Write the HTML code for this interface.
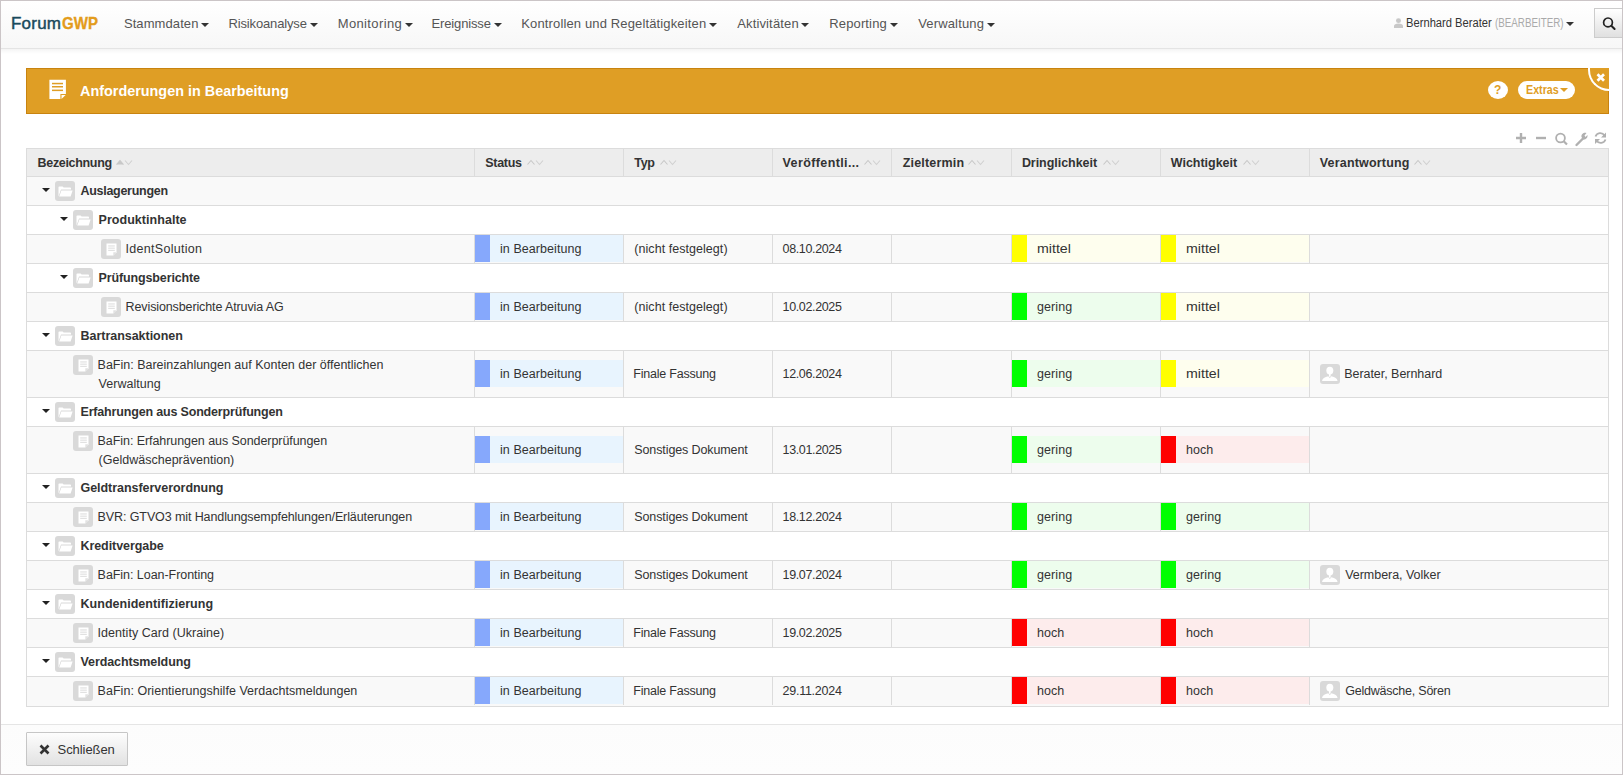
<!DOCTYPE html>
<html><head><meta charset="utf-8"><title>Anforderungen in Bearbeitung</title>
<style>
html,body{margin:0;padding:0;}
body{width:1623px;height:775px;overflow:hidden;position:relative;background:#fff;font-family:"Liberation Sans", sans-serif;}
.t{position:absolute;white-space:nowrap;line-height:1;}
.b{position:absolute;}
.caret{position:absolute;width:0;height:0;border-left:4px solid transparent;border-right:4px solid transparent;border-top:4px solid #333;}
.ico{position:absolute;width:20px;height:20px;border-radius:3px;background:#d9d9d9;display:flex;align-items:center;justify-content:center;}
.av{position:absolute;width:20px;height:20px;border-radius:3px;background:#d9d9d9;}
</style></head><body>
<div class="b" style="left:1px;top:1px;width:1621px;height:47px;background:linear-gradient(#fff,#f7f7f7);"></div>
<div class="b" style="left:1px;top:48px;width:1621px;height:1px;background:#e4e4e4;"></div>
<div class="b" style="left:1px;top:49px;width:1621px;height:5px;background:linear-gradient(rgba(0,0,0,0.045),rgba(0,0,0,0));"></div>
<div class="t" id="t0" style="left:11.00px;top:15.21px;font-size:17px;font-weight:400;color:#1a4a5c;letter-spacing:0.211px;-webkit-text-stroke:0.45px #1a4a5c;">Forum</div>
<div class="t" id="t1" style="left:62.30px;top:15.21px;font-size:17px;font-weight:700;color:#e39c1c;transform:scaleX(0.8841);transform-origin:0.00px 0;-webkit-text-stroke:0.35px #e39c1c;">GWP</div>
<div class="t" id="t2" style="left:123.90px;top:16.60px;font-size:13px;font-weight:400;color:#555;letter-spacing:0.092px;">Stammdaten</div>
<div class="caret" style="left:201.0px;top:23px;"></div>
<div class="t" id="t3" style="left:228.50px;top:16.60px;font-size:13px;font-weight:400;color:#555;letter-spacing:-0.148px;">Risikoanalyse</div>
<div class="caret" style="left:309.7px;top:23px;"></div>
<div class="t" id="t4" style="left:337.70px;top:16.60px;font-size:13px;font-weight:400;color:#555;letter-spacing:0.370px;">Monitoring</div>
<div class="caret" style="left:404.5px;top:23px;"></div>
<div class="t" id="t5" style="left:431.50px;top:16.60px;font-size:13px;font-weight:400;color:#555;letter-spacing:-0.141px;">Ereignisse</div>
<div class="caret" style="left:493.7px;top:23px;"></div>
<div class="t" id="t6" style="left:521.30px;top:16.60px;font-size:13px;font-weight:400;color:#555;letter-spacing:0.138px;">Kontrollen und Regeltätigkeiten</div>
<div class="caret" style="left:708.9px;top:23px;"></div>
<div class="t" id="t7" style="left:737.20px;top:16.60px;font-size:13px;font-weight:400;color:#555;letter-spacing:0.146px;">Aktivitäten</div>
<div class="caret" style="left:801.4px;top:23px;"></div>
<div class="t" id="t8" style="left:829.30px;top:16.60px;font-size:13px;font-weight:400;color:#555;letter-spacing:0.133px;">Reporting</div>
<div class="caret" style="left:889.5px;top:23px;"></div>
<div class="t" id="t9" style="left:918.20px;top:16.60px;font-size:13px;font-weight:400;color:#555;letter-spacing:0.157px;">Verwaltung</div>
<div class="caret" style="left:986.7px;top:23px;"></div>
<svg class="b" style="left:1393.5px;top:18px" width="9" height="10" viewBox="0 0 10 12" preserveAspectRatio="none"><circle cx="5" cy="3.2" r="2.8" fill="#c8c8c8"/><path d="M0 12 V9.5 C0 7.5 2 6.5 5 6.5 C8 6.5 10 7.5 10 9.5 V12 Z" fill="#c8c8c8"/></svg>
<div class="t" id="t10" style="left:1406.00px;top:17.42px;font-size:12.5px;font-weight:400;color:#333;transform:scaleX(0.8921);transform-origin:1.00px 0;">Bernhard Berater</div>
<div class="t" id="t11" style="left:1495.00px;top:17.42px;font-size:12.5px;font-weight:400;color:#aaa;transform:scaleX(0.7831);transform-origin:0.00px 0;">(BEARBEITER)</div>
<div class="caret" style="left:1566px;top:22px;border-top-color:#333"></div>
<div class="b" style="left:1594px;top:8px;width:30px;height:30px;box-sizing:border-box;border:1px solid #ccc;background:linear-gradient(#fff,#e0e0e0);"></div>
<svg class="b" style="left:1602px;top:16px" width="15" height="15" viewBox="0 0 15 15"><circle cx="6" cy="6.4" r="4.4" fill="none" stroke="#222" stroke-width="1.7"/><path d="M9.3 9.7 L12.6 13" stroke="#222" stroke-width="2" stroke-linecap="round"/></svg>
<div class="b" style="left:26px;top:68px;width:1583px;height:46px;box-sizing:border-box;border:1px solid #c8830f;background:#df9e25;"></div>
<svg class="b" style="left:49px;top:79px" width="18" height="21" viewBox="0 0 18 21"><path d="M0.4 0.8 H16.9 V15 H11.4 V20 H0.4 Z" fill="#fff"/><rect x="3" y="3.8" width="11" height="1.5" fill="#df9e25"/><rect x="3" y="7" width="11" height="1.5" fill="#df9e25"/><rect x="3" y="10.6" width="11" height="1.5" fill="#df9e25"/><path d="M12.5 16.1 H16.6 L12.5 20 Z" fill="#fff"/></svg>
<div class="t" id="t12" style="left:80.00px;top:83.38px;font-size:15.5px;font-weight:700;color:#fff;transform:scaleX(0.9287);transform-origin:0.00px 0;">Anforderungen in Bearbeitung</div>
<div class="b" style="left:1488px;top:81px;width:20px;height:18px;border-radius:10px/9px;background:#fff;"></div>
<div class="t" style="left:1494.00px;top:84.04px;font-size:12px;font-weight:700;color:#df9e25;">?</div>
<div class="b" style="left:1518px;top:81px;width:57px;height:18px;border-radius:9px;background:#fff;"></div>
<div class="t" id="t14" style="left:1526.00px;top:84.04px;font-size:12px;font-weight:700;color:#df9e25;transform:scaleX(0.8915);transform-origin:0.00px 0;">Extras</div>
<div class="caret" style="left:1560px;top:88px;border-top-color:#df9e25"></div>
<div class="b" style="left:1588px;top:68px;width:21px;height:23px;box-sizing:border-box;border-left:2px solid #fff;border-bottom:2px solid #fff;border-bottom-left-radius:21px;background:#df9e25;"></div>
<div class="b" style="left:1609px;top:67px;width:13px;height:48px;background:#fff;"></div>
<svg class="b" style="left:1595.8px;top:73px" width="10" height="9" viewBox="0 0 10 9"><path d="M1.5 1.2 L8 7.8 M8 1.2 L1.5 7.8" stroke="#fff" stroke-width="2.7"/></svg>
<svg class="b" style="left:1515px;top:131px" width="95" height="16" viewBox="0 0 95 16"><path d="M6 2 V12 M1 7 H11" stroke="#b0b0b0" stroke-width="2.4"/><path d="M21 7 H31" stroke="#b0b0b0" stroke-width="2.4"/><circle cx="45.5" cy="7" r="4.4" fill="none" stroke="#b0b0b0" stroke-width="1.8"/><path d="M48.5 10 L52 13.5" stroke="#b0b0b0" stroke-width="2.2"/><path d="M61.5 14 L68 7.5" stroke="#b0b0b0" stroke-width="2.4" stroke-linecap="round"/><path d="M66.5 6 C66 3 69 1 71.5 2 L69.5 4.5 L70.5 6 L72.5 4 C73 7 70.5 9 68 8.5 Z" fill="#b0b0b0"/><path d="M81.5 9.5 A5 5 0 0 0 90.5 8.5 M80.5 5.5 A5 5 0 0 1 89.5 4.5" fill="none" stroke="#b0b0b0" stroke-width="1.8"/><path d="M91 1.5 V6.5 H86 Z M80 13 V8 H85 Z" fill="#b0b0b0"/></svg>
<div class="b" style="left:26px;top:148px;width:1583px;height:28px;background:#ededed;"></div>
<div class="t" id="t15" style="left:37.60px;top:156.92px;font-size:12.5px;font-weight:700;color:#333;letter-spacing:-0.325px;">Bezeichnung</div>
<svg class="b" style="left:116.1px;top:158px" width="17" height="9" viewBox="0 0 17 9"><path d="M0.5 6.5 L4 2.5 L7.5 6.5" fill="#c8c8c8" stroke="#c8c8c8" stroke-width="1.1"/><path d="M9 2.5 L12.5 6.5 L16 2.5" fill="none" stroke="#d0d0d0" stroke-width="1.1"/></svg>
<div class="t" id="t16" style="left:485.20px;top:156.92px;font-size:12.5px;font-weight:700;color:#333;letter-spacing:-0.270px;">Status</div>
<svg class="b" style="left:526.6px;top:158px" width="17" height="9" viewBox="0 0 17 9"><path d="M0.5 6.5 L4 2.5 L7.5 6.5" fill="none" stroke="#c8c8c8" stroke-width="1.1"/><path d="M9 2.5 L12.5 6.5 L16 2.5" fill="none" stroke="#d0d0d0" stroke-width="1.1"/></svg>
<div class="t" id="t17" style="left:634.30px;top:156.92px;font-size:12.5px;font-weight:700;color:#333;letter-spacing:-0.330px;">Typ</div>
<svg class="b" style="left:660.1px;top:158px" width="17" height="9" viewBox="0 0 17 9"><path d="M0.5 6.5 L4 2.5 L7.5 6.5" fill="none" stroke="#c8c8c8" stroke-width="1.1"/><path d="M9 2.5 L12.5 6.5 L16 2.5" fill="none" stroke="#d0d0d0" stroke-width="1.1"/></svg>
<div class="t" id="t18" style="left:782.60px;top:156.92px;font-size:12.5px;font-weight:700;color:#333;letter-spacing:0.380px;">Veröffentli...</div>
<svg class="b" style="left:864.4px;top:158px" width="17" height="9" viewBox="0 0 17 9"><path d="M0.5 6.5 L4 2.5 L7.5 6.5" fill="none" stroke="#c8c8c8" stroke-width="1.1"/><path d="M9 2.5 L12.5 6.5 L16 2.5" fill="none" stroke="#d0d0d0" stroke-width="1.1"/></svg>
<div class="t" id="t19" style="left:902.70px;top:156.92px;font-size:12.5px;font-weight:700;color:#333;letter-spacing:0.178px;">Zieltermin</div>
<svg class="b" style="left:968.3px;top:158px" width="17" height="9" viewBox="0 0 17 9"><path d="M0.5 6.5 L4 2.5 L7.5 6.5" fill="none" stroke="#c8c8c8" stroke-width="1.1"/><path d="M9 2.5 L12.5 6.5 L16 2.5" fill="none" stroke="#d0d0d0" stroke-width="1.1"/></svg>
<div class="t" id="t20" style="left:1021.90px;top:156.92px;font-size:12.5px;font-weight:700;color:#333;letter-spacing:-0.045px;">Dringlichkeit</div>
<svg class="b" style="left:1102.5px;top:158px" width="17" height="9" viewBox="0 0 17 9"><path d="M0.5 6.5 L4 2.5 L7.5 6.5" fill="none" stroke="#c8c8c8" stroke-width="1.1"/><path d="M9 2.5 L12.5 6.5 L16 2.5" fill="none" stroke="#d0d0d0" stroke-width="1.1"/></svg>
<div class="t" id="t21" style="left:1170.80px;top:156.92px;font-size:12.5px;font-weight:700;color:#333;letter-spacing:-0.020px;">Wichtigkeit</div>
<svg class="b" style="left:1242.6px;top:158px" width="17" height="9" viewBox="0 0 17 9"><path d="M0.5 6.5 L4 2.5 L7.5 6.5" fill="none" stroke="#c8c8c8" stroke-width="1.1"/><path d="M9 2.5 L12.5 6.5 L16 2.5" fill="none" stroke="#d0d0d0" stroke-width="1.1"/></svg>
<div class="t" id="t22" style="left:1319.80px;top:156.92px;font-size:12.5px;font-weight:700;color:#333;letter-spacing:0.177px;">Verantwortung</div>
<svg class="b" style="left:1413.8px;top:158px" width="17" height="9" viewBox="0 0 17 9"><path d="M0.5 6.5 L4 2.5 L7.5 6.5" fill="none" stroke="#c8c8c8" stroke-width="1.1"/><path d="M9 2.5 L12.5 6.5 L16 2.5" fill="none" stroke="#d0d0d0" stroke-width="1.1"/></svg>
<div class="b" style="left:26px;top:176px;width:1583px;height:29px;background:#f9f9f9;"></div>
<div class="b" style="left:26px;top:176px;width:1583px;height:1px;background:#dcdcdc;"></div>
<div class="caret" style="left:42.0px;top:188px;border-top-color:#222"></div>
<div class="ico" style="left:55px;top:181px"><svg width="15" height="11" viewBox="0 0 15 11"><path d="M0.5 10.5 V1.3 Q0.5 0.5 1.3 0.5 H4.6 L5.6 1.6 H12.2 Q13 1.6 13 2.4 V3.6 H3 Z" fill="#fff"/><path d="M1.2 10.5 L3.4 4.5 H14.6 L12.6 10.5 Z" fill="#fff"/></svg></div>
<div class="t" id="t23" style="left:80.50px;top:184.52px;font-size:12.5px;font-weight:700;color:#333;letter-spacing:-0.287px;">Auslagerungen</div>
<div class="b" style="left:26px;top:205px;width:1583px;height:29px;background:#fff;"></div>
<div class="b" style="left:26px;top:205px;width:1583px;height:1px;background:#dcdcdc;"></div>
<div class="caret" style="left:60.0px;top:217px;border-top-color:#222"></div>
<div class="ico" style="left:73px;top:210px"><svg width="15" height="11" viewBox="0 0 15 11"><path d="M0.5 10.5 V1.3 Q0.5 0.5 1.3 0.5 H4.6 L5.6 1.6 H12.2 Q13 1.6 13 2.4 V3.6 H3 Z" fill="#fff"/><path d="M1.2 10.5 L3.4 4.5 H14.6 L12.6 10.5 Z" fill="#fff"/></svg></div>
<div class="t" id="t24" style="left:98.50px;top:213.52px;font-size:12.5px;font-weight:700;color:#333;letter-spacing:0.042px;">Produktinhalte</div>
<div class="b" style="left:26px;top:234px;width:1583px;height:29px;background:#f9f9f9;"></div>
<div class="b" style="left:26px;top:234px;width:1583px;height:1px;background:#dcdcdc;"></div>
<div class="b" style="left:474px;top:234px;width:1px;height:29px;background:#dcdcdc;"></div>
<div class="b" style="left:623px;top:234px;width:1px;height:29px;background:#dcdcdc;"></div>
<div class="b" style="left:772px;top:234px;width:1px;height:29px;background:#dcdcdc;"></div>
<div class="b" style="left:891px;top:234px;width:1px;height:29px;background:#dcdcdc;"></div>
<div class="b" style="left:1011px;top:234px;width:1px;height:29px;background:#dcdcdc;"></div>
<div class="b" style="left:1160px;top:234px;width:1px;height:29px;background:#dcdcdc;"></div>
<div class="b" style="left:1309px;top:234px;width:1px;height:29px;background:#dcdcdc;"></div>
<div class="ico" style="left:101.3px;top:239px"><svg width="11" height="13" viewBox="0 0 11 13"><path d="M0.5 0.5 H10.5 V9.3 L7.3 12.5 H0.5 Z" fill="#fff"/><rect x="2.2" y="2.4" width="6.6" height="1.1" fill="#dedede"/><rect x="2.2" y="4.6" width="6.6" height="1.1" fill="#dedede"/><rect x="2.2" y="6.8" width="6.6" height="1.1" fill="#dedede"/><path d="M7.3 12.5 V9.3 H10.5 Z" fill="#e2e2e2"/></svg></div>
<div class="t" id="t25" style="left:125.60px;top:242.72px;font-size:12.5px;font-weight:400;color:#333;letter-spacing:0.290px;">IdentSolution</div>
<div class="b" style="left:475px;top:235.0px;width:15px;height:27px;background:#86a8fc;"></div>
<div class="b" style="left:490px;top:235.0px;width:133px;height:27px;background:#e8f4fe;"></div>
<div class="t" id="t26" style="left:500.00px;top:242.72px;font-size:12.5px;font-weight:400;color:#333;letter-spacing:0.064px;">in Bearbeitung</div>
<div class="t" id="t27" style="left:634.30px;top:242.72px;font-size:12.5px;font-weight:400;color:#333;letter-spacing:0.050px;">(nicht festgelegt)</div>
<div class="t" id="t28" style="left:782.60px;top:242.72px;font-size:12.5px;font-weight:400;color:#333;letter-spacing:-0.368px;">08.10.2024</div>
<div class="b" style="left:1012px;top:235.0px;width:15px;height:27px;background:#ffff00;"></div>
<div class="b" style="left:1027px;top:235.0px;width:133px;height:27px;background:#fefeee;"></div>
<div class="t" id="t29" style="left:1037.00px;top:242.72px;font-size:12.5px;font-weight:400;color:#333;transform:scaleX(1.1345);transform-origin:0.00px 0;">mittel</div>
<div class="b" style="left:1161px;top:235.0px;width:15px;height:27px;background:#ffff00;"></div>
<div class="b" style="left:1176px;top:235.0px;width:133px;height:27px;background:#fefeee;"></div>
<div class="t" id="t30" style="left:1186.00px;top:242.72px;font-size:12.5px;font-weight:400;color:#333;transform:scaleX(1.1345);transform-origin:0.00px 0;">mittel</div>
<div class="b" style="left:26px;top:263px;width:1583px;height:29px;background:#fff;"></div>
<div class="b" style="left:26px;top:263px;width:1583px;height:1px;background:#dcdcdc;"></div>
<div class="caret" style="left:60.0px;top:275px;border-top-color:#222"></div>
<div class="ico" style="left:73px;top:268px"><svg width="15" height="11" viewBox="0 0 15 11"><path d="M0.5 10.5 V1.3 Q0.5 0.5 1.3 0.5 H4.6 L5.6 1.6 H12.2 Q13 1.6 13 2.4 V3.6 H3 Z" fill="#fff"/><path d="M1.2 10.5 L3.4 4.5 H14.6 L12.6 10.5 Z" fill="#fff"/></svg></div>
<div class="t" id="t31" style="left:98.50px;top:271.52px;font-size:12.5px;font-weight:700;color:#333;letter-spacing:-0.129px;">Prüfungsberichte</div>
<div class="b" style="left:26px;top:292px;width:1583px;height:29px;background:#f9f9f9;"></div>
<div class="b" style="left:26px;top:292px;width:1583px;height:1px;background:#dcdcdc;"></div>
<div class="b" style="left:474px;top:292px;width:1px;height:29px;background:#dcdcdc;"></div>
<div class="b" style="left:623px;top:292px;width:1px;height:29px;background:#dcdcdc;"></div>
<div class="b" style="left:772px;top:292px;width:1px;height:29px;background:#dcdcdc;"></div>
<div class="b" style="left:891px;top:292px;width:1px;height:29px;background:#dcdcdc;"></div>
<div class="b" style="left:1011px;top:292px;width:1px;height:29px;background:#dcdcdc;"></div>
<div class="b" style="left:1160px;top:292px;width:1px;height:29px;background:#dcdcdc;"></div>
<div class="b" style="left:1309px;top:292px;width:1px;height:29px;background:#dcdcdc;"></div>
<div class="ico" style="left:101.3px;top:297px"><svg width="11" height="13" viewBox="0 0 11 13"><path d="M0.5 0.5 H10.5 V9.3 L7.3 12.5 H0.5 Z" fill="#fff"/><rect x="2.2" y="2.4" width="6.6" height="1.1" fill="#dedede"/><rect x="2.2" y="4.6" width="6.6" height="1.1" fill="#dedede"/><rect x="2.2" y="6.8" width="6.6" height="1.1" fill="#dedede"/><path d="M7.3 12.5 V9.3 H10.5 Z" fill="#e2e2e2"/></svg></div>
<div class="t" id="t32" style="left:125.60px;top:300.72px;font-size:12.5px;font-weight:400;color:#333;letter-spacing:-0.116px;">Revisionsberichte Atruvia AG</div>
<div class="b" style="left:475px;top:293.0px;width:15px;height:27px;background:#86a8fc;"></div>
<div class="b" style="left:490px;top:293.0px;width:133px;height:27px;background:#e8f4fe;"></div>
<div class="t" id="t33" style="left:500.00px;top:300.72px;font-size:12.5px;font-weight:400;color:#333;letter-spacing:0.064px;">in Bearbeitung</div>
<div class="t" id="t34" style="left:634.30px;top:300.72px;font-size:12.5px;font-weight:400;color:#333;letter-spacing:0.050px;">(nicht festgelegt)</div>
<div class="t" id="t35" style="left:782.60px;top:300.72px;font-size:12.5px;font-weight:400;color:#333;letter-spacing:-0.368px;">10.02.2025</div>
<div class="b" style="left:1012px;top:293.0px;width:15px;height:27px;background:#00ff00;"></div>
<div class="b" style="left:1027px;top:293.0px;width:133px;height:27px;background:#edfded;"></div>
<div class="t" id="t36" style="left:1037.00px;top:300.72px;font-size:12.5px;font-weight:400;color:#333;letter-spacing:0.101px;">gering</div>
<div class="b" style="left:1161px;top:293.0px;width:15px;height:27px;background:#ffff00;"></div>
<div class="b" style="left:1176px;top:293.0px;width:133px;height:27px;background:#fefeee;"></div>
<div class="t" id="t37" style="left:1186.00px;top:300.72px;font-size:12.5px;font-weight:400;color:#333;transform:scaleX(1.1345);transform-origin:0.00px 0;">mittel</div>
<div class="b" style="left:26px;top:321px;width:1583px;height:29px;background:#fff;"></div>
<div class="b" style="left:26px;top:321px;width:1583px;height:1px;background:#dcdcdc;"></div>
<div class="caret" style="left:42.0px;top:333px;border-top-color:#222"></div>
<div class="ico" style="left:55px;top:326px"><svg width="15" height="11" viewBox="0 0 15 11"><path d="M0.5 10.5 V1.3 Q0.5 0.5 1.3 0.5 H4.6 L5.6 1.6 H12.2 Q13 1.6 13 2.4 V3.6 H3 Z" fill="#fff"/><path d="M1.2 10.5 L3.4 4.5 H14.6 L12.6 10.5 Z" fill="#fff"/></svg></div>
<div class="t" id="t38" style="left:80.50px;top:329.52px;font-size:12.5px;font-weight:700;color:#333;letter-spacing:-0.031px;">Bartransaktionen</div>
<div class="b" style="left:26px;top:350px;width:1583px;height:47px;background:#f9f9f9;"></div>
<div class="b" style="left:26px;top:350px;width:1583px;height:1px;background:#dcdcdc;"></div>
<div class="b" style="left:474px;top:350px;width:1px;height:47px;background:#dcdcdc;"></div>
<div class="b" style="left:623px;top:350px;width:1px;height:47px;background:#dcdcdc;"></div>
<div class="b" style="left:772px;top:350px;width:1px;height:47px;background:#dcdcdc;"></div>
<div class="b" style="left:891px;top:350px;width:1px;height:47px;background:#dcdcdc;"></div>
<div class="b" style="left:1011px;top:350px;width:1px;height:47px;background:#dcdcdc;"></div>
<div class="b" style="left:1160px;top:350px;width:1px;height:47px;background:#dcdcdc;"></div>
<div class="b" style="left:1309px;top:350px;width:1px;height:47px;background:#dcdcdc;"></div>
<div class="ico" style="left:73.3px;top:355px"><svg width="11" height="13" viewBox="0 0 11 13"><path d="M0.5 0.5 H10.5 V9.3 L7.3 12.5 H0.5 Z" fill="#fff"/><rect x="2.2" y="2.4" width="6.6" height="1.1" fill="#dedede"/><rect x="2.2" y="4.6" width="6.6" height="1.1" fill="#dedede"/><rect x="2.2" y="6.8" width="6.6" height="1.1" fill="#dedede"/><path d="M7.3 12.5 V9.3 H10.5 Z" fill="#e2e2e2"/></svg></div>
<div class="t" id="t39" style="left:97.60px;top:359.32px;font-size:12.5px;font-weight:400;color:#333;letter-spacing:-0.005px;">BaFin: Bareinzahlungen auf Konten der öffentlichen</div>
<div class="t" id="t40" style="left:98.60px;top:377.82px;font-size:12.5px;font-weight:400;color:#333;letter-spacing:0.034px;">Verwaltung</div>
<div class="b" style="left:475px;top:360.0px;width:15px;height:27px;background:#86a8fc;"></div>
<div class="b" style="left:490px;top:360.0px;width:133px;height:27px;background:#e8f4fe;"></div>
<div class="t" id="t41" style="left:500.00px;top:367.72px;font-size:12.5px;font-weight:400;color:#333;letter-spacing:0.064px;">in Bearbeitung</div>
<div class="t" id="t42" style="left:633.30px;top:367.72px;font-size:12.5px;font-weight:400;color:#333;letter-spacing:-0.208px;">Finale Fassung</div>
<div class="t" id="t43" style="left:782.60px;top:367.72px;font-size:12.5px;font-weight:400;color:#333;letter-spacing:-0.368px;">12.06.2024</div>
<div class="b" style="left:1012px;top:360.0px;width:15px;height:27px;background:#00ff00;"></div>
<div class="b" style="left:1027px;top:360.0px;width:133px;height:27px;background:#edfded;"></div>
<div class="t" id="t44" style="left:1037.00px;top:367.72px;font-size:12.5px;font-weight:400;color:#333;letter-spacing:0.101px;">gering</div>
<div class="b" style="left:1161px;top:360.0px;width:15px;height:27px;background:#ffff00;"></div>
<div class="b" style="left:1176px;top:360.0px;width:133px;height:27px;background:#fefeee;"></div>
<div class="t" id="t45" style="left:1186.00px;top:367.72px;font-size:12.5px;font-weight:400;color:#333;transform:scaleX(1.1345);transform-origin:0.00px 0;">mittel</div>
<div class="av" style="left:1320px;top:363.5px"><svg width="20" height="20" viewBox="0 0 20 20"><ellipse cx="9.8" cy="6.6" rx="3.5" ry="3.9" fill="#fff"/><path d="M9 10 H10.6 V12 L9.8 13.5 L9 12 Z" fill="#fff"/><path d="M2 17 C2.4 14.6 4.5 13.2 8.3 12.3 L9.8 14.2 L11.3 12.3 C15.1 13.2 17.2 14.6 17.6 17 Z" fill="#fff"/></svg></div>
<div class="t" id="t46" style="left:1344.20px;top:367.72px;font-size:12.5px;font-weight:400;color:#333;letter-spacing:-0.039px;">Berater, Bernhard</div>
<div class="b" style="left:26px;top:397px;width:1583px;height:29px;background:#fff;"></div>
<div class="b" style="left:26px;top:397px;width:1583px;height:1px;background:#dcdcdc;"></div>
<div class="caret" style="left:42.0px;top:409px;border-top-color:#222"></div>
<div class="ico" style="left:55px;top:402px"><svg width="15" height="11" viewBox="0 0 15 11"><path d="M0.5 10.5 V1.3 Q0.5 0.5 1.3 0.5 H4.6 L5.6 1.6 H12.2 Q13 1.6 13 2.4 V3.6 H3 Z" fill="#fff"/><path d="M1.2 10.5 L3.4 4.5 H14.6 L12.6 10.5 Z" fill="#fff"/></svg></div>
<div class="t" id="t47" style="left:80.50px;top:405.52px;font-size:12.5px;font-weight:700;color:#333;letter-spacing:-0.174px;">Erfahrungen aus Sonderprüfungen</div>
<div class="b" style="left:26px;top:426px;width:1583px;height:47px;background:#f9f9f9;"></div>
<div class="b" style="left:26px;top:426px;width:1583px;height:1px;background:#dcdcdc;"></div>
<div class="b" style="left:474px;top:426px;width:1px;height:47px;background:#dcdcdc;"></div>
<div class="b" style="left:623px;top:426px;width:1px;height:47px;background:#dcdcdc;"></div>
<div class="b" style="left:772px;top:426px;width:1px;height:47px;background:#dcdcdc;"></div>
<div class="b" style="left:891px;top:426px;width:1px;height:47px;background:#dcdcdc;"></div>
<div class="b" style="left:1011px;top:426px;width:1px;height:47px;background:#dcdcdc;"></div>
<div class="b" style="left:1160px;top:426px;width:1px;height:47px;background:#dcdcdc;"></div>
<div class="b" style="left:1309px;top:426px;width:1px;height:47px;background:#dcdcdc;"></div>
<div class="ico" style="left:73.3px;top:431px"><svg width="11" height="13" viewBox="0 0 11 13"><path d="M0.5 0.5 H10.5 V9.3 L7.3 12.5 H0.5 Z" fill="#fff"/><rect x="2.2" y="2.4" width="6.6" height="1.1" fill="#dedede"/><rect x="2.2" y="4.6" width="6.6" height="1.1" fill="#dedede"/><rect x="2.2" y="6.8" width="6.6" height="1.1" fill="#dedede"/><path d="M7.3 12.5 V9.3 H10.5 Z" fill="#e2e2e2"/></svg></div>
<div class="t" id="t48" style="left:97.60px;top:435.32px;font-size:12.5px;font-weight:400;color:#333;letter-spacing:-0.069px;">BaFin: Erfahrungen aus Sonderprüfungen</div>
<div class="t" id="t49" style="left:98.60px;top:453.82px;font-size:12.5px;font-weight:400;color:#333;letter-spacing:0.008px;">(Geldwäscheprävention)</div>
<div class="b" style="left:475px;top:436.0px;width:15px;height:27px;background:#86a8fc;"></div>
<div class="b" style="left:490px;top:436.0px;width:133px;height:27px;background:#e8f4fe;"></div>
<div class="t" id="t50" style="left:500.00px;top:443.72px;font-size:12.5px;font-weight:400;color:#333;letter-spacing:0.064px;">in Bearbeitung</div>
<div class="t" id="t51" style="left:634.30px;top:443.72px;font-size:12.5px;font-weight:400;color:#333;letter-spacing:-0.110px;">Sonstiges Dokument</div>
<div class="t" id="t52" style="left:782.60px;top:443.72px;font-size:12.5px;font-weight:400;color:#333;letter-spacing:-0.368px;">13.01.2025</div>
<div class="b" style="left:1012px;top:436.0px;width:15px;height:27px;background:#00ff00;"></div>
<div class="b" style="left:1027px;top:436.0px;width:133px;height:27px;background:#edfded;"></div>
<div class="t" id="t53" style="left:1037.00px;top:443.72px;font-size:12.5px;font-weight:400;color:#333;letter-spacing:0.101px;">gering</div>
<div class="b" style="left:1161px;top:436.0px;width:15px;height:27px;background:#ff0000;"></div>
<div class="b" style="left:1176px;top:436.0px;width:133px;height:27px;background:#fdecec;"></div>
<div class="t" id="t54" style="left:1186.00px;top:443.72px;font-size:12.5px;font-weight:400;color:#333;letter-spacing:0.015px;">hoch</div>
<div class="b" style="left:26px;top:473px;width:1583px;height:29px;background:#fff;"></div>
<div class="b" style="left:26px;top:473px;width:1583px;height:1px;background:#dcdcdc;"></div>
<div class="caret" style="left:42.0px;top:485px;border-top-color:#222"></div>
<div class="ico" style="left:55px;top:478px"><svg width="15" height="11" viewBox="0 0 15 11"><path d="M0.5 10.5 V1.3 Q0.5 0.5 1.3 0.5 H4.6 L5.6 1.6 H12.2 Q13 1.6 13 2.4 V3.6 H3 Z" fill="#fff"/><path d="M1.2 10.5 L3.4 4.5 H14.6 L12.6 10.5 Z" fill="#fff"/></svg></div>
<div class="t" id="t55" style="left:80.50px;top:481.52px;font-size:12.5px;font-weight:700;color:#333;letter-spacing:-0.040px;">Geldtransferverordnung</div>
<div class="b" style="left:26px;top:502px;width:1583px;height:29px;background:#f9f9f9;"></div>
<div class="b" style="left:26px;top:502px;width:1583px;height:1px;background:#dcdcdc;"></div>
<div class="b" style="left:474px;top:502px;width:1px;height:29px;background:#dcdcdc;"></div>
<div class="b" style="left:623px;top:502px;width:1px;height:29px;background:#dcdcdc;"></div>
<div class="b" style="left:772px;top:502px;width:1px;height:29px;background:#dcdcdc;"></div>
<div class="b" style="left:891px;top:502px;width:1px;height:29px;background:#dcdcdc;"></div>
<div class="b" style="left:1011px;top:502px;width:1px;height:29px;background:#dcdcdc;"></div>
<div class="b" style="left:1160px;top:502px;width:1px;height:29px;background:#dcdcdc;"></div>
<div class="b" style="left:1309px;top:502px;width:1px;height:29px;background:#dcdcdc;"></div>
<div class="ico" style="left:73.3px;top:507px"><svg width="11" height="13" viewBox="0 0 11 13"><path d="M0.5 0.5 H10.5 V9.3 L7.3 12.5 H0.5 Z" fill="#fff"/><rect x="2.2" y="2.4" width="6.6" height="1.1" fill="#dedede"/><rect x="2.2" y="4.6" width="6.6" height="1.1" fill="#dedede"/><rect x="2.2" y="6.8" width="6.6" height="1.1" fill="#dedede"/><path d="M7.3 12.5 V9.3 H10.5 Z" fill="#e2e2e2"/></svg></div>
<div class="t" id="t56" style="left:97.60px;top:510.72px;font-size:12.5px;font-weight:400;color:#333;letter-spacing:-0.103px;">BVR: GTVO3 mit Handlungsempfehlungen/Erläuterungen</div>
<div class="b" style="left:475px;top:503.0px;width:15px;height:27px;background:#86a8fc;"></div>
<div class="b" style="left:490px;top:503.0px;width:133px;height:27px;background:#e8f4fe;"></div>
<div class="t" id="t57" style="left:500.00px;top:510.72px;font-size:12.5px;font-weight:400;color:#333;letter-spacing:0.064px;">in Bearbeitung</div>
<div class="t" id="t58" style="left:634.30px;top:510.72px;font-size:12.5px;font-weight:400;color:#333;letter-spacing:-0.110px;">Sonstiges Dokument</div>
<div class="t" id="t59" style="left:782.60px;top:510.72px;font-size:12.5px;font-weight:400;color:#333;letter-spacing:-0.368px;">18.12.2024</div>
<div class="b" style="left:1012px;top:503.0px;width:15px;height:27px;background:#00ff00;"></div>
<div class="b" style="left:1027px;top:503.0px;width:133px;height:27px;background:#edfded;"></div>
<div class="t" id="t60" style="left:1037.00px;top:510.72px;font-size:12.5px;font-weight:400;color:#333;letter-spacing:0.101px;">gering</div>
<div class="b" style="left:1161px;top:503.0px;width:15px;height:27px;background:#00ff00;"></div>
<div class="b" style="left:1176px;top:503.0px;width:133px;height:27px;background:#edfded;"></div>
<div class="t" id="t61" style="left:1186.00px;top:510.72px;font-size:12.5px;font-weight:400;color:#333;letter-spacing:0.101px;">gering</div>
<div class="b" style="left:26px;top:531px;width:1583px;height:29px;background:#fff;"></div>
<div class="b" style="left:26px;top:531px;width:1583px;height:1px;background:#dcdcdc;"></div>
<div class="caret" style="left:42.0px;top:543px;border-top-color:#222"></div>
<div class="ico" style="left:55px;top:536px"><svg width="15" height="11" viewBox="0 0 15 11"><path d="M0.5 10.5 V1.3 Q0.5 0.5 1.3 0.5 H4.6 L5.6 1.6 H12.2 Q13 1.6 13 2.4 V3.6 H3 Z" fill="#fff"/><path d="M1.2 10.5 L3.4 4.5 H14.6 L12.6 10.5 Z" fill="#fff"/></svg></div>
<div class="t" id="t62" style="left:80.50px;top:539.52px;font-size:12.5px;font-weight:700;color:#333;letter-spacing:-0.075px;">Kreditvergabe</div>
<div class="b" style="left:26px;top:560px;width:1583px;height:29px;background:#f9f9f9;"></div>
<div class="b" style="left:26px;top:560px;width:1583px;height:1px;background:#dcdcdc;"></div>
<div class="b" style="left:474px;top:560px;width:1px;height:29px;background:#dcdcdc;"></div>
<div class="b" style="left:623px;top:560px;width:1px;height:29px;background:#dcdcdc;"></div>
<div class="b" style="left:772px;top:560px;width:1px;height:29px;background:#dcdcdc;"></div>
<div class="b" style="left:891px;top:560px;width:1px;height:29px;background:#dcdcdc;"></div>
<div class="b" style="left:1011px;top:560px;width:1px;height:29px;background:#dcdcdc;"></div>
<div class="b" style="left:1160px;top:560px;width:1px;height:29px;background:#dcdcdc;"></div>
<div class="b" style="left:1309px;top:560px;width:1px;height:29px;background:#dcdcdc;"></div>
<div class="ico" style="left:73.3px;top:565px"><svg width="11" height="13" viewBox="0 0 11 13"><path d="M0.5 0.5 H10.5 V9.3 L7.3 12.5 H0.5 Z" fill="#fff"/><rect x="2.2" y="2.4" width="6.6" height="1.1" fill="#dedede"/><rect x="2.2" y="4.6" width="6.6" height="1.1" fill="#dedede"/><rect x="2.2" y="6.8" width="6.6" height="1.1" fill="#dedede"/><path d="M7.3 12.5 V9.3 H10.5 Z" fill="#e2e2e2"/></svg></div>
<div class="t" id="t63" style="left:97.60px;top:568.72px;font-size:12.5px;font-weight:400;color:#333;letter-spacing:-0.051px;">BaFin: Loan-Fronting</div>
<div class="b" style="left:475px;top:561.0px;width:15px;height:27px;background:#86a8fc;"></div>
<div class="b" style="left:490px;top:561.0px;width:133px;height:27px;background:#e8f4fe;"></div>
<div class="t" id="t64" style="left:500.00px;top:568.72px;font-size:12.5px;font-weight:400;color:#333;letter-spacing:0.064px;">in Bearbeitung</div>
<div class="t" id="t65" style="left:634.30px;top:568.72px;font-size:12.5px;font-weight:400;color:#333;letter-spacing:-0.110px;">Sonstiges Dokument</div>
<div class="t" id="t66" style="left:782.60px;top:568.72px;font-size:12.5px;font-weight:400;color:#333;letter-spacing:-0.368px;">19.07.2024</div>
<div class="b" style="left:1012px;top:561.0px;width:15px;height:27px;background:#00ff00;"></div>
<div class="b" style="left:1027px;top:561.0px;width:133px;height:27px;background:#edfded;"></div>
<div class="t" id="t67" style="left:1037.00px;top:568.72px;font-size:12.5px;font-weight:400;color:#333;letter-spacing:0.101px;">gering</div>
<div class="b" style="left:1161px;top:561.0px;width:15px;height:27px;background:#00ff00;"></div>
<div class="b" style="left:1176px;top:561.0px;width:133px;height:27px;background:#edfded;"></div>
<div class="t" id="t68" style="left:1186.00px;top:568.72px;font-size:12.5px;font-weight:400;color:#333;letter-spacing:0.101px;">gering</div>
<div class="av" style="left:1320px;top:564.5px"><svg width="20" height="20" viewBox="0 0 20 20"><ellipse cx="9.8" cy="6.6" rx="3.5" ry="3.9" fill="#fff"/><path d="M9 10 H10.6 V12 L9.8 13.5 L9 12 Z" fill="#fff"/><path d="M2 17 C2.4 14.6 4.5 13.2 8.3 12.3 L9.8 14.2 L11.3 12.3 C15.1 13.2 17.2 14.6 17.6 17 Z" fill="#fff"/></svg></div>
<div class="t" id="t69" style="left:1345.20px;top:568.72px;font-size:12.5px;font-weight:400;color:#333;letter-spacing:-0.035px;">Vermbera, Volker</div>
<div class="b" style="left:26px;top:589px;width:1583px;height:29px;background:#fff;"></div>
<div class="b" style="left:26px;top:589px;width:1583px;height:1px;background:#dcdcdc;"></div>
<div class="caret" style="left:42.0px;top:601px;border-top-color:#222"></div>
<div class="ico" style="left:55px;top:594px"><svg width="15" height="11" viewBox="0 0 15 11"><path d="M0.5 10.5 V1.3 Q0.5 0.5 1.3 0.5 H4.6 L5.6 1.6 H12.2 Q13 1.6 13 2.4 V3.6 H3 Z" fill="#fff"/><path d="M1.2 10.5 L3.4 4.5 H14.6 L12.6 10.5 Z" fill="#fff"/></svg></div>
<div class="t" id="t70" style="left:80.50px;top:597.52px;font-size:12.5px;font-weight:700;color:#333;letter-spacing:0.030px;">Kundenidentifizierung</div>
<div class="b" style="left:26px;top:618px;width:1583px;height:29px;background:#f9f9f9;"></div>
<div class="b" style="left:26px;top:618px;width:1583px;height:1px;background:#dcdcdc;"></div>
<div class="b" style="left:474px;top:618px;width:1px;height:29px;background:#dcdcdc;"></div>
<div class="b" style="left:623px;top:618px;width:1px;height:29px;background:#dcdcdc;"></div>
<div class="b" style="left:772px;top:618px;width:1px;height:29px;background:#dcdcdc;"></div>
<div class="b" style="left:891px;top:618px;width:1px;height:29px;background:#dcdcdc;"></div>
<div class="b" style="left:1011px;top:618px;width:1px;height:29px;background:#dcdcdc;"></div>
<div class="b" style="left:1160px;top:618px;width:1px;height:29px;background:#dcdcdc;"></div>
<div class="b" style="left:1309px;top:618px;width:1px;height:29px;background:#dcdcdc;"></div>
<div class="ico" style="left:73.3px;top:623px"><svg width="11" height="13" viewBox="0 0 11 13"><path d="M0.5 0.5 H10.5 V9.3 L7.3 12.5 H0.5 Z" fill="#fff"/><rect x="2.2" y="2.4" width="6.6" height="1.1" fill="#dedede"/><rect x="2.2" y="4.6" width="6.6" height="1.1" fill="#dedede"/><rect x="2.2" y="6.8" width="6.6" height="1.1" fill="#dedede"/><path d="M7.3 12.5 V9.3 H10.5 Z" fill="#e2e2e2"/></svg></div>
<div class="t" id="t71" style="left:97.60px;top:626.72px;font-size:12.5px;font-weight:400;color:#333;letter-spacing:0.037px;">Identity Card (Ukraine)</div>
<div class="b" style="left:475px;top:619.0px;width:15px;height:27px;background:#86a8fc;"></div>
<div class="b" style="left:490px;top:619.0px;width:133px;height:27px;background:#e8f4fe;"></div>
<div class="t" id="t72" style="left:500.00px;top:626.72px;font-size:12.5px;font-weight:400;color:#333;letter-spacing:0.064px;">in Bearbeitung</div>
<div class="t" id="t73" style="left:633.30px;top:626.72px;font-size:12.5px;font-weight:400;color:#333;letter-spacing:-0.208px;">Finale Fassung</div>
<div class="t" id="t74" style="left:782.60px;top:626.72px;font-size:12.5px;font-weight:400;color:#333;letter-spacing:-0.368px;">19.02.2025</div>
<div class="b" style="left:1012px;top:619.0px;width:15px;height:27px;background:#ff0000;"></div>
<div class="b" style="left:1027px;top:619.0px;width:133px;height:27px;background:#fdecec;"></div>
<div class="t" id="t75" style="left:1037.00px;top:626.72px;font-size:12.5px;font-weight:400;color:#333;letter-spacing:0.015px;">hoch</div>
<div class="b" style="left:1161px;top:619.0px;width:15px;height:27px;background:#ff0000;"></div>
<div class="b" style="left:1176px;top:619.0px;width:133px;height:27px;background:#fdecec;"></div>
<div class="t" id="t76" style="left:1186.00px;top:626.72px;font-size:12.5px;font-weight:400;color:#333;letter-spacing:0.015px;">hoch</div>
<div class="b" style="left:26px;top:647px;width:1583px;height:29px;background:#fff;"></div>
<div class="b" style="left:26px;top:647px;width:1583px;height:1px;background:#dcdcdc;"></div>
<div class="caret" style="left:42.0px;top:659px;border-top-color:#222"></div>
<div class="ico" style="left:55px;top:652px"><svg width="15" height="11" viewBox="0 0 15 11"><path d="M0.5 10.5 V1.3 Q0.5 0.5 1.3 0.5 H4.6 L5.6 1.6 H12.2 Q13 1.6 13 2.4 V3.6 H3 Z" fill="#fff"/><path d="M1.2 10.5 L3.4 4.5 H14.6 L12.6 10.5 Z" fill="#fff"/></svg></div>
<div class="t" id="t77" style="left:80.50px;top:655.52px;font-size:12.5px;font-weight:700;color:#333;letter-spacing:-0.100px;">Verdachtsmeldung</div>
<div class="b" style="left:26px;top:676px;width:1583px;height:29px;background:#f9f9f9;"></div>
<div class="b" style="left:26px;top:676px;width:1583px;height:1px;background:#dcdcdc;"></div>
<div class="b" style="left:474px;top:676px;width:1px;height:29px;background:#dcdcdc;"></div>
<div class="b" style="left:623px;top:676px;width:1px;height:29px;background:#dcdcdc;"></div>
<div class="b" style="left:772px;top:676px;width:1px;height:29px;background:#dcdcdc;"></div>
<div class="b" style="left:891px;top:676px;width:1px;height:29px;background:#dcdcdc;"></div>
<div class="b" style="left:1011px;top:676px;width:1px;height:29px;background:#dcdcdc;"></div>
<div class="b" style="left:1160px;top:676px;width:1px;height:29px;background:#dcdcdc;"></div>
<div class="b" style="left:1309px;top:676px;width:1px;height:29px;background:#dcdcdc;"></div>
<div class="ico" style="left:73.3px;top:681px"><svg width="11" height="13" viewBox="0 0 11 13"><path d="M0.5 0.5 H10.5 V9.3 L7.3 12.5 H0.5 Z" fill="#fff"/><rect x="2.2" y="2.4" width="6.6" height="1.1" fill="#dedede"/><rect x="2.2" y="4.6" width="6.6" height="1.1" fill="#dedede"/><rect x="2.2" y="6.8" width="6.6" height="1.1" fill="#dedede"/><path d="M7.3 12.5 V9.3 H10.5 Z" fill="#e2e2e2"/></svg></div>
<div class="t" id="t78" style="left:97.60px;top:684.72px;font-size:12.5px;font-weight:400;color:#333;letter-spacing:0.029px;">BaFin: Orientierungshilfe Verdachtsmeldungen</div>
<div class="b" style="left:475px;top:677.0px;width:15px;height:27px;background:#86a8fc;"></div>
<div class="b" style="left:490px;top:677.0px;width:133px;height:27px;background:#e8f4fe;"></div>
<div class="t" id="t79" style="left:500.00px;top:684.72px;font-size:12.5px;font-weight:400;color:#333;letter-spacing:0.064px;">in Bearbeitung</div>
<div class="t" id="t80" style="left:633.30px;top:684.72px;font-size:12.5px;font-weight:400;color:#333;letter-spacing:-0.208px;">Finale Fassung</div>
<div class="t" id="t81" style="left:782.60px;top:684.72px;font-size:12.5px;font-weight:400;color:#333;letter-spacing:-0.265px;">29.11.2024</div>
<div class="b" style="left:1012px;top:677.0px;width:15px;height:27px;background:#ff0000;"></div>
<div class="b" style="left:1027px;top:677.0px;width:133px;height:27px;background:#fdecec;"></div>
<div class="t" id="t82" style="left:1037.00px;top:684.72px;font-size:12.5px;font-weight:400;color:#333;letter-spacing:0.015px;">hoch</div>
<div class="b" style="left:1161px;top:677.0px;width:15px;height:27px;background:#ff0000;"></div>
<div class="b" style="left:1176px;top:677.0px;width:133px;height:27px;background:#fdecec;"></div>
<div class="t" id="t83" style="left:1186.00px;top:684.72px;font-size:12.5px;font-weight:400;color:#333;letter-spacing:0.015px;">hoch</div>
<div class="av" style="left:1320px;top:680.5px"><svg width="20" height="20" viewBox="0 0 20 20"><ellipse cx="9.8" cy="6.6" rx="3.5" ry="3.9" fill="#fff"/><path d="M9 10 H10.6 V12 L9.8 13.5 L9 12 Z" fill="#fff"/><path d="M2 17 C2.4 14.6 4.5 13.2 8.3 12.3 L9.8 14.2 L11.3 12.3 C15.1 13.2 17.2 14.6 17.6 17 Z" fill="#fff"/></svg></div>
<div class="t" id="t84" style="left:1345.20px;top:684.72px;font-size:12.5px;font-weight:400;color:#333;letter-spacing:-0.221px;">Geldwäsche, Sören</div>
<div class="b" style="left:26px;top:148px;width:1583px;height:1px;background:#dcdcdc;"></div>
<div class="b" style="left:26px;top:705px;width:1583px;height:1px;background:#f9f9f9;"></div>
<div class="b" style="left:26px;top:706px;width:1583px;height:1px;background:#dcdcdc;"></div>
<div class="b" style="left:26px;top:148px;width:1px;height:559px;background:#dcdcdc;"></div>
<div class="b" style="left:1608px;top:148px;width:1px;height:559px;background:#dcdcdc;"></div>
<div class="b" style="left:474px;top:148px;width:1px;height:28px;background:#dcdcdc;"></div>
<div class="b" style="left:623px;top:148px;width:1px;height:28px;background:#dcdcdc;"></div>
<div class="b" style="left:772px;top:148px;width:1px;height:28px;background:#dcdcdc;"></div>
<div class="b" style="left:891px;top:148px;width:1px;height:28px;background:#dcdcdc;"></div>
<div class="b" style="left:1011px;top:148px;width:1px;height:28px;background:#dcdcdc;"></div>
<div class="b" style="left:1160px;top:148px;width:1px;height:28px;background:#dcdcdc;"></div>
<div class="b" style="left:1309px;top:148px;width:1px;height:28px;background:#dcdcdc;"></div>
<div class="b" style="left:1px;top:724px;width:1621px;height:1px;background:#e5e5e5;"></div>
<div class="b" style="left:1px;top:725px;width:1621px;height:49px;background:linear-gradient(#fcfcfc,#fdfdfd);"></div>
<div class="b" style="left:26px;top:732px;width:102px;height:34px;box-sizing:border-box;border:1px solid #c6c6c6;border-radius:1px;background:linear-gradient(#fdfdfd,#e2e2e2);"></div>
<svg class="b" style="left:39px;top:744px" width="11" height="11" viewBox="0 0 11 11"><path d="M1.5 1.5 L9.5 9.5 M9.5 1.5 L1.5 9.5" stroke="#333" stroke-width="2.6"/></svg>
<div class="t" id="t85" style="left:57.60px;top:743.30px;font-size:13px;font-weight:400;color:#333;letter-spacing:-0.072px;">Schließen</div>
<div class="b" style="left:0px;top:0px;width:1623px;height:1px;background:#cbc5c7;"></div>
<div class="b" style="left:0px;top:774px;width:1623px;height:1px;background:#cbc5c7;"></div>
<div class="b" style="left:0px;top:0px;width:1px;height:775px;background:#cbc5c7;"></div>
<div class="b" style="left:1622px;top:0px;width:1px;height:775px;background:#cbc5c7;"></div>
</body></html>
